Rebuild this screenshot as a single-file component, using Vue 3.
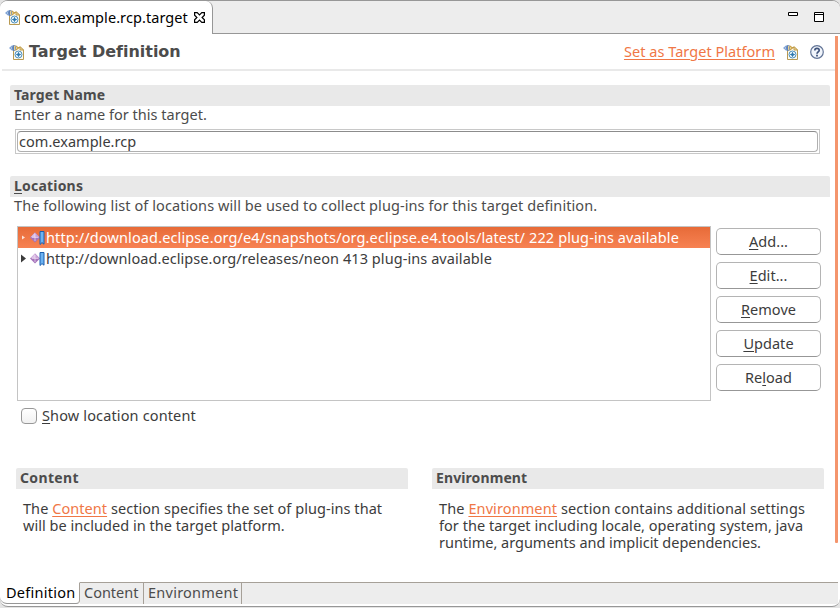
<script setup>
import { h } from 'vue'

const locations = [
  { text: 'http://download.eclipse.org/e4/snapshots/org.eclipse.e4.tools/latest/ 222 plug-ins available', selected: true },
  { text: 'http://download.eclipse.org/releases/neon 413 plug-ins available', selected: false },
]
const buttons = [
  ['', 'A', 'dd...'],
  ['', 'E', 'dit...'],
  ['', 'R', 'emove'],
  ['', 'U', 'pdate'],
  ['Re', 'l', 'oad'],
]

const TargetIcon = (props) =>
  h('svg', { width: 16, height: 16, viewBox: '0 0 16 16' }, [
    h('path', { d: 'M4.5 3.5H11.5L14.5 6V15.5H4.5Z', fill: '#fcfaf2', stroke: '#b89a52' }),
    h('path', { d: 'M11 2.5V6H14.5Z', fill: '#ecd79d', stroke: '#c09d4c' }),
    h('path', { d: 'M0 4L3.5 1V7Z', fill: '#7fa3d6' }),
    h('path', { d: 'M1.8 4L3.6 2.7V5.3Z', fill: '#d3e1f5' }),
    h('path', { d: 'M6.5 1L10.5 4L6.5 7Z', fill: '#c9a148' }),
    h('path', { d: 'M7 3L8.6 4L7 5Z', fill: '#f3dfa4' }),
    h('ellipse', { cx: 5, cy: 4, rx: 1.9, ry: 3, fill: '#5c80b8' }),
    h('path', { d: 'M5 1.6A1.4 2.4 0 0 1 5 6.4Z', fill: '#ead08a' }),
    h('circle', { cx: 9.5, cy: 10.5, r: 3.5, fill: '#eef7fc', stroke: '#4c8fbd' }),
    h('circle', { cx: 9.5, cy: 10.5, r: 1.5, fill: '#2f78ad' }),
    h('path', { d: 'M9.5 8V13M7 10.5H12', stroke: '#2f78ad', 'stroke-width': 0.8 }),
    props.arrow ? h('path', { d: 'M0 13L3.5 10.5V12.2H5V14H3.5V15.5Z', fill: '#2c6c9e' }) : null,
  ])
TargetIcon.props = ['arrow']
</script>

<template>
  <div class="editor">
    <div class="tabstrip">
      <div class="tab">
        <TargetIcon class="tab-icon" />
        <span class="tab-label">com.example.rcp.target</span>
        <svg class="close" width="11" height="11" viewBox="0 0 11 11">
          <path d="M0.6 0.6H3.2L5.5 2.9L7.8 0.6H10.4V3.2L8.1 5.5L10.4 7.8V10.4H7.8L5.5 8.1L3.2 10.4H0.6V7.8L2.9 5.5L0.6 3.2Z" fill="#fff" stroke="#000" stroke-width="1.2" />
        </svg>
      </div>
      <div class="strip-rest">
        <svg width="10" height="4" viewBox="0 0 10 4"><path d="M0.5 0.5H9.5V3.5H0.5Z" fill="#fff" stroke="#000" /></svg>
        <svg width="10" height="10" viewBox="0 0 10 10"><path d="M0.5 0.5H9.5V9.5H0.5ZM0.5 2.5H9.5" fill="#fff" stroke="#000" /></svg>
      </div>
    </div>

    <div class="body">
      <div class="page">
        <header class="head">
          <TargetIcon />
          <h1>Target Definition</h1>
          <a class="set">Set as Target Platform</a>
          <TargetIcon class="set-icon" arrow />
          <svg class="help" width="14" height="14" viewBox="0 0 14 14">
            <circle cx="7" cy="7" r="6.3" fill="#f1f5fb" stroke="#627496" stroke-width="1.2" />
            <path d="M4.8 5.4C4.8 2.6 9.2 2.7 9.2 5.2C9.2 6.8 7 6.9 7 8.8" fill="none" stroke="#40547c" stroke-width="1.7" />
            <path d="M6.1 9.8H7.9V11.5H6.1Z" fill="#40547c" />
          </svg>
        </header>

        <section class="name">
          <h2 class="bar">Target Name</h2>
          <p class="desc d1">Enter a name for this target.</p>
          <div class="field"><div class="field-in">com.example.rcp</div></div>
        </section>

        <section class="locs">
          <h2 class="bar loc-title"><u>L</u>ocations</h2>
          <p class="desc">The following list of locations will be used to collect plug-ins for this target definition.</p>
          <div class="loc-row">
            <div class="tree">
              <div v-for="l in locations" :key="l.text" class="item" :class="{ selected: l.selected }">
                <svg class="expander" width="5" height="9" viewBox="0 0 5 9">
                  <path v-if="l.selected" d="M1 2.5L4 4.5L1 6.5Z" fill="#fbe3d8" />
                  <path v-else d="M0 0.5L5 4.5L0 8.5Z" fill="#3c3c3c" />
                </svg>
                <svg class="site" width="15" height="16" viewBox="0 0 15 16">
                  <path d="M5 2.5L10 7.5L5 12.5L0 7.5Z" fill="#a673bb" />
                  <path d="M5 2.5L9.5 7.2H5Z" fill="#c9a0d6" />
                  <path d="M5 2.5V7.2H0.5Z" fill="#dcc0e6" />
                  <path d="M5 4V11M2 7.4H8.5" stroke="#f0e2f5" stroke-width="0.7" />
                  <path d="M10 1.5H14V14.2L12 12.6L10 14.5Z" fill="#6db3f2" stroke="#1d5fae" />
                </svg>
                <span>{{ l.text }}</span>
              </div>
            </div>
            <div class="buttons">
              <button v-for="b in buttons" :key="b[2]">{{ b[0] }}<u>{{ b[1] }}</u>{{ b[2] }}</button>
            </div>
          </div>
          <label class="check"><i class="box"></i><span><u>S</u>how location content</span></label>
        </section>

        <div class="columns">
          <section>
            <h2 class="bar content-title">Content</h2>
            <p class="text">
              <span class="c1">The <a>Content</a> section specifies the set of plug-ins that</span>
              <span class="c2">will be included in the target platform.</span>
            </p>
          </section>
          <section>
            <h2 class="bar">Environment</h2>
            <p class="text">
              <span class="e1">The <a>Environment</a> section contains additional settings</span>
              <span class="c2">for the target including locale, operating system, java</span>
              <span class="e3">runtime, arguments and implicit dependencies.</span>
            </p>
          </section>
        </div>
      </div>
      <div class="scroll"></div>
    </div>

    <div class="pages">
      <div class="pg active">Definition</div>
      <div class="pg pg-content">Content</div>
      <div class="pg pg-env">Environment</div>
      <div class="pg-rest"></div>
    </div>
  </div>
</template>

<style>
body { background: #e4e4e4; }
</style>

<style scoped>
* { box-sizing: border-box; margin: 0; }
svg { display: block; flex: none; }
.editor {
  width: 840px; height: 607px; display: flex; flex-direction: column;
  background: #fff; border-top: 1px solid #979797; border-bottom: 1px solid #979797;
  border-radius: 8px; overflow: hidden;
  font: 14.5px/18px "Noto Sans", sans-serif; letter-spacing: 0.06px; color: #3c3c3c;
}
.tabstrip { display: flex; height: 33px; background: #ededed; }
.tab {
  width: 213px; display: flex; align-items: center; padding-left: 5px; padding-bottom: 1px;
  background: #fff; border-right: 1px solid #979797; border-top-right-radius: 7px; color: #000;
}
.tab-label { margin-left: 3px; letter-spacing: 0.08px; white-space: nowrap; width: 170px; }
.strip-rest {
  flex: 1; display: flex; align-items: flex-start; gap: 16px; justify-content: flex-end;
  padding: 11px 16px 0 0; border-bottom: 1px solid #979797;
}
.body { flex: 1; display: flex; min-height: 0; }
.page { width: 835px; display: flex; flex-direction: column; }
.head {
  height: 37px; margin-left: 2px; padding-left: 7px; padding-right: 11px;
  display: flex; align-items: center; border-bottom: 2px solid #e9e9e9;
}
h1 { margin-left: 4px; font: bold 16px/20px "DejaVu Sans", sans-serif; letter-spacing: -0.02px; color: #4c4c4c; flex: 1; }
a { color: #f07746; text-decoration: underline; text-underline-offset: 2px; text-decoration-thickness: 1px; }
.set { letter-spacing: 0.04px; margin-right: 8px; padding-bottom: 2px; }
.set-icon { margin-right: 11px; }
u { text-decoration: underline; text-underline-offset: 2px; text-decoration-thickness: 1px; }
.bar {
  height: 21px; padding-left: 4px; background: #e9e9e9; border-radius: 2px 2px 0 0;
  font-size: 14px; line-height: 20px; font-weight: 700; letter-spacing: 0.1px; color: #4c4c4c;
}
.loc-title { letter-spacing: 0.2px; }
.content-title { letter-spacing: 0.36px; }
.name { margin: 14px 5px 0 10px; }
.desc { padding-left: 4px; height: 18px; line-height: 16px; letter-spacing: 0.08px; color: #4c4c4c; white-space: nowrap; }
.d1 { letter-spacing: 0.02px; }
.field { margin: 5px 10px 0 5px; height: 25px; padding: 1px; border: 1px solid #c8c8c8; }
.field-in {
  height: 21px; padding-left: 1px; line-height: 18px; letter-spacing: 0.03px;
  border: 1px solid #b0b0b0; border-top-color: #8c8c8c; border-radius: 4px;
}
.locs { margin: 22px 5px 0 10px; }
.loc-row { display: flex; gap: 5px; margin: 11px 9px 0 7px; }
.tree { width: 694px; height: 175px; border: 1px solid #c4c4c4; background: #fff; }
.item { height: 21px; display: flex; align-items: center; padding-left: 3px; white-space: nowrap; letter-spacing: 0.075px; }
.item span { margin-left: 1px; padding-bottom: 2px; }
.item.selected { background: linear-gradient(#e76b38, #f78253); color: #fff; letter-spacing: 0.12px; }
.site { margin-left: 4px; }
.buttons { width: 105px; padding-top: 2px; display: flex; flex-direction: column; gap: 7px; }
button {
  height: 27px; padding: 0 0 2px; font: inherit; letter-spacing: 0.04px; color: #3c3c3c; background: #fff;
  border: 1px solid #b4b4b4; border-bottom-color: #979797; border-radius: 5px;
}
.check { display: flex; align-items: center; gap: 5px; height: 24px; margin: 3px 0 0 11px; letter-spacing: 0.14px; }
.check span { padding-bottom: 2px; }
.box { width: 16px; height: 16px; border: 1px solid #989898; border-radius: 4px; background: linear-gradient(#fff, #f1f1f1); }
.columns { display: grid; grid-template-columns: 392px 392px; gap: 24px; margin: 40px 0 0 16px; }
.text { padding: 11px 0 0 7px; line-height: 17px; white-space: nowrap; }
.text span { display: block; }
.c1 { letter-spacing: 0.055px; }
.c2 { letter-spacing: 0.03px; }
.e1 { letter-spacing: 0.105px; }
.e3 { letter-spacing: -0.02px; }
.scroll { width: 3px; height: 507px; margin-top: 2px; background: #f4956d; border-radius: 0 0 1px 1px; }
.pages { display: flex; height: 24px; padding-bottom: 2px; line-height: 19px; letter-spacing: 0.25px; color: #4c4c4c; }
.pg { background: #ededed; border-top: 1px solid #a6a098; border-right: 1px solid #a6a098; padding-left: 4px; }
.pg.active {
  width: 80px; padding-left: 6px; background: #fff; color: #000;
  border-top-color: transparent; border-bottom: 1px solid #979797; border-radius: 0 0 4px 7px;
}
.pg-content { width: 64px; letter-spacing: -0.02px; }
.pg-env { width: 98px; }
.pg-rest { flex: 1; margin-right: 2px; background: #ededed; border-top: 1px solid #a6a098; }
</style>
